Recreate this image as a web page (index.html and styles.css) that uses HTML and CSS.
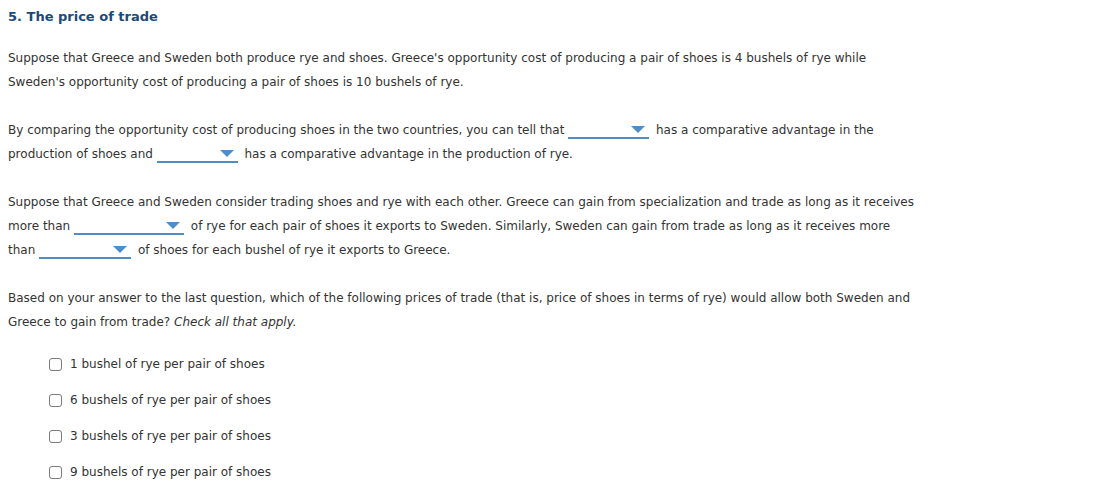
FILE: index.html
```html
<!DOCTYPE html>
<html lang="en">
<head>
<meta charset="utf-8">
<title>The price of trade</title>
<link rel="stylesheet" href="styles.css">
</head>
<body>
<div class="question">
  <h2 class="q-title">5. The price of trade</h2>
  <p class="para">Suppose that Greece and Sweden both produce rye and shoes. Greece's opportunity cost of producing a pair of shoes is 4 bushels of rye while Sweden's opportunity cost of producing a pair of shoes is 10 bushels of rye.</p>
  <p class="para">By comparing the opportunity cost of producing shoes in the two countries, you can tell that <span class="dd dd-a"><span class="arrow"></span></span> has a comparative advantage in the production of shoes and <span class="dd dd-a"><span class="arrow"></span></span> has a comparative advantage in the production of rye.</p>
  <p class="para">Suppose that Greece and Sweden consider trading shoes and rye with each other. Greece can gain from specialization and trade as long as it receives more than <span class="dd dd-b"><span class="arrow"></span></span> of rye for each pair of shoes it exports to Sweden. Similarly, Sweden can gain from trade as long as it receives more than <span class="dd dd-c"><span class="arrow"></span></span> of shoes for each bushel of rye it exports to Greece.</p>
  <p class="para lead-in">Based on your answer to the last question, which of the following prices of trade (that is, price of shoes in terms of rye) would allow both Sweden and Greece to gain from trade? <em>Check all that apply.</em></p>
  <ul class="choices">
    <li class="choice"><span class="box"></span>1 bushel of rye per pair of shoes</li>
    <li class="choice"><span class="box"></span>6 bushels of rye per pair of shoes</li>
    <li class="choice"><span class="box"></span>3 bushels of rye per pair of shoes</li>
    <li class="choice"><span class="box"></span>9 bushels of rye per pair of shoes</li>
  </ul>
</div>
</body>
</html>
```
FILE: styles.css
```css
html, body {
  margin: 0;
  padding: 0;
  background: #ffffff;
}
body {
  font-family: Verdana, "DejaVu Sans", sans-serif;
  font-size: 12px;
  color: #333333;
}
.question {
  padding: 7px 8px;
  width: 909px;
}
.q-title {
  margin: 0;
  font-size: 13px;
  font-weight: bold;
  color: #1b4a78;
  line-height: 20px;
}
.para {
  margin: 19px 0 24px 0;
  line-height: 24px;
}
.para + .para { margin-top: 0; }
.para.lead-in { margin-bottom: 18px; }
.dd {
  display: inline-block;
  position: relative;
  height: 17px;
  border-bottom: 2px solid #4d8ec8;
  vertical-align: -5px;
  margin: 0 3px 0 0;
}
.dd-a { width: 81px; }
.dd-b { width: 110px; }
.dd-c { width: 92px; }
.arrow {
  position: absolute;
  right: 4px;
  top: 6px;
  width: 0;
  height: 0;
  border-left: 7px solid transparent;
  border-right: 7px solid transparent;
  border-top: 7px solid #4d8ec8;
}
.choices {
  list-style: none;
  margin: 0;
  padding: 0 0 0 41px;
}
.choice {
  display: flex;
  align-items: center;
  height: 24px;
  margin-top: 12px;
}
.box {
  width: 11px;
  height: 11px;
  border: 1px solid #7a7a7a;
  border-radius: 3px;
  margin-right: 8px;
}
```
